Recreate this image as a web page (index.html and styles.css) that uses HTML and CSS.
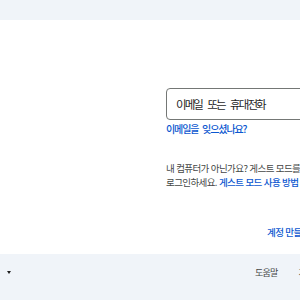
FILE: index.html
```html
<!DOCTYPE html>
<html lang="ko">
<head>
    <meta charset="UTF-8">
    <meta name="viewport" content="width=device-width, initial-scale=1.0">
    <title>로그인</title>
    <link rel="stylesheet" href="styles.css">
</head>
<body>
    <div class="top_bar"></div>
    <div class="main">
        <div class="login_col">
            <!-- 입력 -->
            <div class="field">
                <span class="field_text">이메일 또는 휴대전화</span>
            </div>
            <a class="link forgot">이메일을 잊으셨나요?</a>
            <!-- 안내 -->
            <p class="guest">내 컴퓨터가 아닌가요? 게스트 모드를 사용하여 비공개로<br>로그인하세요. <a class="link">게스트 모드 사용 방법</a></p>
            <div class="actions">
                <a class="link create">계정 만들기</a>
                <button class="next">다음</button>
            </div>
        </div>
    </div>
    <div class="footer">
        <div class="lang"><span class="arrow"></span></div>
        <div class="footer_links">
            <a>도움말</a>
            <a>개인정보처리방침</a>
            <a>약관</a>
        </div>
    </div>
</body>
</html>
```

FILE: styles.css
```css
body{
    margin: 0;
    width: 300px;
    height: 300px;
    overflow: hidden;
    background-color: #fff;
    font-family: "Noto Sans CJK KR", sans-serif;
    color: #1f1f1f;
    white-space: nowrap;
}
.top_bar{
    height: 20px;
    background-color: #f0f4f9;
}
.main{
    height: 234px;
    padding-left: 166px;
}
.login_col{
    display: flex;
    flex-direction: column;
    align-items: flex-start;
    padding-top: 68px;
}
.field{
    width: 200px;
    height: 30px;
    border: 1px solid #747775;
    border-radius: 4px;
    display: flex;
    align-items: center;
    padding-left: 9px;
}
.field_text{
    font-size: 11.5px;
    letter-spacing: -1.9px;
    word-spacing: 4px;
    color: #1f1f1f;
}
.link{
    color: #0b57d0;
    font-weight: 500;
}
.forgot{
    margin-top: 2px;
    font-size: 10px;
    line-height: 14px;
    letter-spacing: -1.1px;
    word-spacing: 2px;
}
.guest{
    margin: 25px 0 0 0;
    font-size: 9.5px;
    line-height: 14px;
    letter-spacing: -0.6px;
    color: #444746;
}
.guest .link{
    font-size: 9.5px;
}
.actions{
    display: flex;
    align-items: center;
    gap: 40px;
    margin-top: 32px;
    padding-left: 101px;
}
.create{
    font-size: 9.5px;
    letter-spacing: -0.6px;
}
.next{
    border: none;
    background-color: #0b57d0;
    color: #fff;
    border-radius: 12px;
    padding: 4px 14px;
    font-family: inherit;
    font-size: 9.5px;
}
.footer{
    height: 46px;
    background-color: #f0f4f9;
    display: flex;
    align-items: center;
    padding-bottom: 10px;
    box-sizing: border-box;
}
.lang{
    flex-shrink: 0;
    width: 255px;
    padding-left: 7px;
    box-sizing: border-box;
    display: flex;
    align-items: center;
}
.arrow{
    width: 0;
    height: 0;
    border-left: 2.5px solid transparent;
    border-right: 2.5px solid transparent;
    border-top: 3px solid #1f1f1f;
}
.footer_links{
    display: flex;
    flex-shrink: 0;
    gap: 21px;
    font-size: 9px;
    letter-spacing: -0.8px;
    color: #444746;
}
```
